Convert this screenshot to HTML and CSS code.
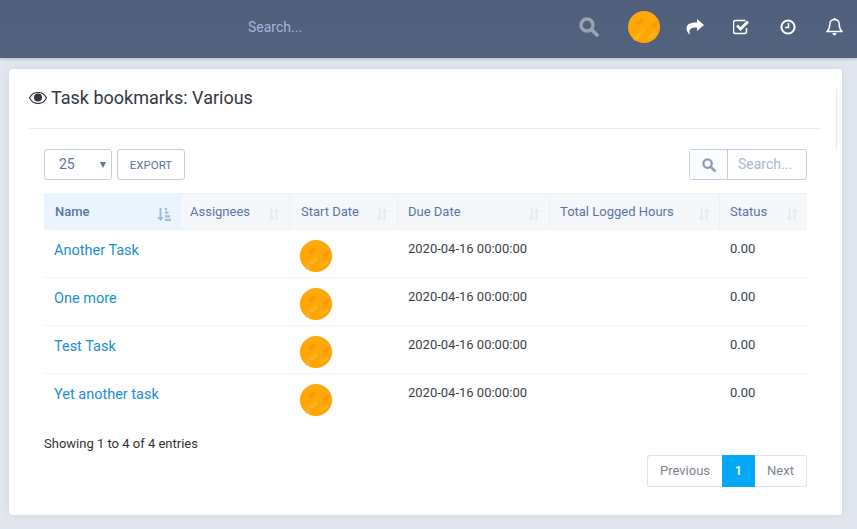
FILE: index.html
```html
<!DOCTYPE html>
<html lang="en">
<head>
    <meta charset="UTF-8">
    <meta name="viewport" content="width=device-width, initial-scale=1.0">
    <title>Task bookmarks</title>
    <link rel="stylesheet" href="styles.css">
</head>
<body>
    <svg class="defs" width="0" height="0">
        <defs>
            <linearGradient id="orange" x1="0" y1="0" x2="0" y2="1">
                <stop offset="0" stop-color="#ffa90c"/>
                <stop offset="1" stop-color="#ffa400"/>
            </linearGradient>
            <symbol id="avatar" viewBox="0 0 32 32">
                <circle cx="16" cy="16" r="16" fill="url(#orange)"/>
                <path d="M10 13l4-4M25 15l4-3" stroke="#fb8f08" stroke-width="3" stroke-linecap="round" opacity=".7"/>
                <path d="M7 28l9-9M21 26l6-4" stroke="#ffb92e" stroke-width="3.500" stroke-linecap="round" opacity=".6"/>
            </symbol>
            <symbol id="sort" viewBox="0 0 12 13">
                <path d="M2.500 0h2v9H7l-3.500 4L0 9h2.500zM7.500 13V4H5l3.500-4L12 4H9.500v9z"/>
            </symbol>
        </defs>
    </svg>

    <header class="navbar">
        <span class="nav-search">Search...</span>
        <svg class="nav-glass" width="20" height="20" viewBox="0 0 20 20"><circle cx="8" cy="8" r="6" fill="none" stroke="currentColor" stroke-width="3.400"/><path d="M12.500 12.500l5.500 5.500" stroke="currentColor" stroke-width="3.800" stroke-linecap="round"/></svg>
        <svg class="nav-avatar" width="32" height="32"><use href="#avatar"/></svg>
        <svg class="nav-icon" width="18" height="16" viewBox="0 0 18 16"><path d="M11 0l7 6-7 6V8.500C6 8.500 3.500 9.500 3.500 13c0 1 .2 1.800.5 2.800C2 14 .5 12 .5 9.500 .5 5 4.500 3.500 11 3.500z" fill="#fff"/></svg>
        <svg class="nav-icon" width="17" height="16" viewBox="0 0 17 16"><path d="M13.500 9v3.500a2 2 0 0 1-2 2h-9a2 2 0 0 1-2-2v-9a2 2 0 0 1 2-2h10" fill="none" stroke="#fff" stroke-width="1.500"/><path d="M4 6.500l3.500 3.500L15 2.500" fill="none" stroke="#fff" stroke-width="2.800"/></svg>
        <svg class="nav-icon nav-clock" width="16" height="16" viewBox="0 0 16 16"><circle cx="8" cy="8" r="6.600" fill="none" stroke="#fff" stroke-width="2"/><path d="M8.500 4v4.500H5" fill="none" stroke="#fff" stroke-width="1.600"/></svg>
        <svg class="nav-icon nav-bell" width="17" height="18" viewBox="0 0 17 18"><path d="M8.500 1.500c3 0 4.700 2 4.700 4.800 0 4 1 5.500 2.800 7.200H1c1.800-1.700 2.800-3.200 2.800-7.200 0-2.800 1.700-4.800 4.700-4.800z" fill="none" stroke="#fff" stroke-width="1.400"/><path d="M6.500 15h4c0 1.500-1 2.500-2 2.500s-2-1-2-2.500z" fill="#fff"/><circle cx="8.500" cy="1.200" r="1.100" fill="#fff"/></svg>
    </header>

    <main class="card">
        <span class="card-rule"></span>
        <h1 class="card-title">
            <svg width="18" height="12" viewBox="0 0 18 12"><path d="M9 .5C5 .5 2 3 .5 6 2 9 5 11.500 9 11.500S16 9 17.500 6C16 3 13 .5 9 .5z" fill="none" stroke="#33383f" stroke-width="1.200"/><circle cx="9" cy="5.600" r="4" fill="#33383f"/></svg>
            Task bookmarks: Various
        </h1>

        <div class="toolbar">
            <div class="select">25<span class="caret"></span></div>
            <button class="export">EXPORT</button>
            <div class="search-box">
                <span class="search-addon"><svg width="14" height="14" viewBox="0 0 14 14"><circle cx="5.600" cy="5.600" r="4.200" fill="none" stroke="currentColor" stroke-width="2.200"/><path d="M8.800 8.800l4 4" stroke="currentColor" stroke-width="2.400" stroke-linecap="round"/></svg></span>
                <span class="search-input">Search...</span>
            </div>
        </div>

        <table class="tasks">
            <thead>
                <tr>
                    <th class="col-name sorted">Name<svg class="sort-active" width="14" height="13" viewBox="0 0 14 13"><path d="M2.500 0h2v9H7l-3.500 4L0 9h2.500zM8 0h2v2.200H8zM8 3.600h3.500v2.200H8zM8 7.200h5v2.200H8zM8 10.800h6V13H8z"/></svg></th>
                    <th class="col-assignees">Assignees<svg class="sort" width="12" height="13"><use href="#sort"/></svg></th>
                    <th class="col-start">Start Date<svg class="sort" width="12" height="13"><use href="#sort"/></svg></th>
                    <th class="col-due">Due Date<svg class="sort" width="12" height="13"><use href="#sort"/></svg></th>
                    <th class="col-hours">Total Logged Hours<svg class="sort" width="12" height="13"><use href="#sort"/></svg></th>
                    <th class="col-status">Status<svg class="sort" width="12" height="13"><use href="#sort"/></svg></th>
                </tr>
            </thead>
            <tbody>
                <tr>
                    <td class="task-name"><a href="#">Another Task</a></td>
                    <td></td>
                    <td class="task-avatar"><svg class="avatar" width="32" height="32"><use href="#avatar"/></svg></td>
                    <td>2020-04-16 00:00:00</td>
                    <td></td>
                    <td>0.00</td>
                </tr>
                <tr>
                    <td class="task-name"><a href="#">One more</a></td>
                    <td></td>
                    <td class="task-avatar"><svg class="avatar" width="32" height="32"><use href="#avatar"/></svg></td>
                    <td>2020-04-16 00:00:00</td>
                    <td></td>
                    <td>0.00</td>
                </tr>
                <tr>
                    <td class="task-name"><a href="#">Test Task</a></td>
                    <td></td>
                    <td class="task-avatar"><svg class="avatar" width="32" height="32"><use href="#avatar"/></svg></td>
                    <td>2020-04-16 00:00:00</td>
                    <td></td>
                    <td>0.00</td>
                </tr>
                <tr>
                    <td class="task-name"><a href="#">Yet another task</a></td>
                    <td></td>
                    <td class="task-avatar"><svg class="avatar" width="32" height="32"><use href="#avatar"/></svg></td>
                    <td>2020-04-16 00:00:00</td>
                    <td></td>
                    <td>0.00</td>
                </tr>
            </tbody>
        </table>

        <p class="info">Showing 1 to 4 of 4 entries</p>
        <div class="pagination">
            <a class="page-link prev" href="#">Previous</a>
            <a class="page-link current" href="#">1</a>
            <a class="page-link next" href="#">Next</a>
        </div>
    </main>
</body>
</html>
```

FILE: styles.css
```css
* {
  box-sizing: border-box;
}

body {
  font-family: Roboto, "Liberation Sans", sans-serif;
  margin: 0;
  height: 529px;
  overflow: hidden;
  background: #e2e6ee;
  color: #333;
}

.defs {
  display: block;
  height: 0;
}

.navbar {
  height: 58px;
  background: linear-gradient(180deg, #505f7c 0%, #53627f 100%);
  display: flex;
  align-items: center;
  padding-left: 248px;
  padding-bottom: 4px;
  box-shadow: 0 1px 3px rgba(60, 70, 90, 0.3);
}

.nav-search {
  width: 320px;
  font-size: 14px;
  color: #a3b6da;
}

.nav-glass {
  color: #9aa2b0;
  margin-left: 11px;
}

.nav-avatar {
  margin-left: 29px;
}

.nav-icon {
  margin-left: 26px;
}

.nav-icon + .nav-icon {
  margin-left: 29px;
}

.nav-icon.nav-clock,
.nav-icon.nav-bell {
  margin-left: 30px;
}

.card {
  position: relative;
  width: 833px;
  height: 446px;
  margin: 11px 0 0 9px;
  padding: 0 35px;
  background: #fff;
  border-radius: 4px;
  box-shadow: 0 0 8px rgba(120, 130, 150, 0.15);
}

.card-rule {
  position: absolute;
  left: 827px;
  top: 20px;
  width: 1px;
  height: 60px;
  background: #e8ebef;
}

.card-title {
  margin: 0 -14px 0 -15px;
  height: 60px;
  display: flex;
  align-items: center;
  gap: 4px;
  padding-bottom: 2px;
  font-size: 18px;
  font-weight: 400;
  color: #33383f;
  border-bottom: 1px solid #e8ebef;
}

.toolbar {
  display: flex;
  align-items: center;
  gap: 5px;
  margin-top: 20px;
  height: 31px;
}

.select {
  width: 68px;
  height: 31px;
  padding-left: 14px;
  line-height: 29px;
  font-size: 14px;
  color: #5a74a8;
  border: 1px solid #c3cfdc;
  border-radius: 3px;
  position: relative;
}

.caret {
  position: absolute;
  right: 5px;
  top: 12px;
  border-left: 3.500px solid transparent;
  border-right: 3.500px solid transparent;
  border-top: 6px solid #5a74a8;
}

.export {
  width: 68px;
  height: 31px;
  padding: 0;
  font-family: inherit;
  font-size: 11.500px;
  color: #5a74a8;
  background: #fff;
  border: 1px solid #c3cfdc;
  border-radius: 3px;
}

.search-box {
  margin-left: auto;
  width: 118px;
  height: 31px;
  display: flex;
  border: 1px solid #c3cfdc;
  border-radius: 3px;
}

.search-addon {
  width: 38px;
  display: flex;
  align-items: center;
  justify-content: center;
  color: #8a9bb8;
  background: #fafcff;
  border-right: 1px solid #c3cfdc;
}

.search-input {
  flex: 1;
  padding-left: 10px;
  line-height: 29px;
  font-size: 14px;
  color: #a9b8d0;
}

.tasks {
  width: 763px;
  margin-top: 13px;
  table-layout: fixed;
  border-collapse: separate;
  border-spacing: 0;
  font-size: 13px;
}

.tasks th {
  position: relative;
  height: 37px;
  padding: 0 10px 1px;
  text-align: left;
  font-weight: 400;
  color: #5a74a8;
  background: #f5f7fb;
  border-top: 1px solid #edf2f9;
  border-bottom: 1px solid #edf2f9;
  border-right: 1px solid #ebf1f9;
}

.tasks th.sorted {
  font-weight: 500;
  padding-left: 11px;
  background: #e9f4ff;
  border-color: #e9f4ff;
}

.tasks th:last-child {
  border-right: 0;
}

.col-name { width: 137px; }
.col-assignees { width: 109px; }
.col-start { width: 108px; }
.col-due { width: 152px; }
.col-hours { width: 170px; }
.col-status { width: 87px; }

.tasks th.col-assignees {
  padding-left: 9px;
}

.tasks th.col-start {
  padding-left: 11px;
}

.sort,
.sort-active {
  position: absolute;
  right: 9px;
  top: 14px;
}

.sort {
  fill: #e4ebf3;
}

.sort-active {
  fill: #a3bcdc;
}

.tasks td {
  height: 48px;
  padding: 0 10px 11px;
  vertical-align: middle;
  border-bottom: 1px solid #eef4fb;
  color: #3a3f46;
}

.tasks tr:last-child td {
  border-bottom: 0;
}

.tasks td.task-name {
  padding: 0 10px 7px;
}

.tasks a {
  font-size: 14.500px;
  color: #1a8fd6;
  text-decoration: none;
}

.tasks td.task-avatar {
  padding: 4px 10px 0;
}

.avatar {
  display: block;
}

.info {
  margin: 14px 0 0;
  font-size: 13px;
  color: #333;
}

.pagination {
  display: flex;
  justify-content: flex-end;
  margin-top: 4px;
}

.page-link {
  height: 32px;
  line-height: 30px;
  font-size: 13px;
  color: #7d8590;
  text-decoration: none;
  border: 1px solid #e1e3e6;
}

.prev {
  width: 75px;
  text-align: center;
  border-right: 0;
  border-radius: 3px 0 0 3px;
}

.current {
  width: 33px;
  text-align: center;
  font-weight: 500;
  color: #fff;
  background: #03a9f4;
  border-color: #03a9f4;
}

.next {
  width: 52px;
  text-align: center;
  border-left: 0;
  border-radius: 0 3px 3px 0;
}
```
